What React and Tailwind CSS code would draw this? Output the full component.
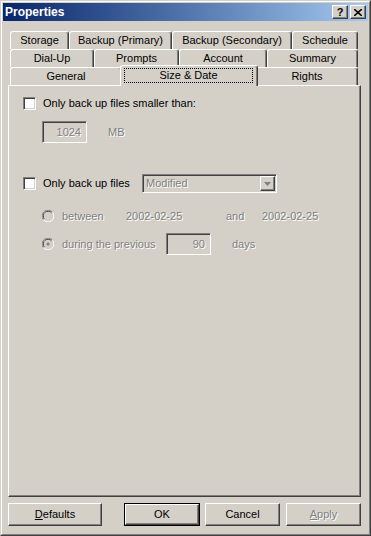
import React from 'react';

const raised = 'border border-t-white border-l-white border-b-[#404040] border-r-[#404040] shadow-[inset_-1px_-1px_0_#808080]';
const sunken = 'border border-t-[#808080] border-l-[#808080] border-b-white border-r-white shadow-[inset_1px_1px_0_#404040,inset_-1px_-1px_0_#d4d0c8]';
const dim = 'text-[#808080] [text-shadow:1px_1px_0_#fff]';

const rows = [
  [['Storage', 59], ['Backup (Primary)', 103], ['Backup (Secondary)', 120], ['Schedule', 66]],
  [['Dial-Up', 84], ['Prompts', 85], ['Account', 88], ['Summary', 91]],
];

function Tab({ label, width, selected }) {
  if (selected) {
    return (
      <div
        className="relative z-10 -mx-[2px] -mt-[2px] h-[21px] rounded-t-[3px] border-t border-l border-r border-t-white border-l-white border-r-[#404040] bg-[#d4d0c8] shadow-[inset_-1px_0_0_#808080] pl-[3px] pr-[4px] pt-[2px]"
        style={{ width: width + 4 }}
      >
        <div className="flex h-[15px] items-center justify-center border border-dotted border-black leading-none">
          {label}
        </div>
      </div>
    );
  }
  return (
    <div
      className="flex h-[18px] items-center justify-center rounded-t-[3px] border-t border-l border-r border-t-white border-l-white border-r-[#404040] shadow-[inset_-1px_0_0_#808080] leading-none"
      style={{ width }}
    >
      {label}
    </div>
  );
}

function Checkbox() {
  return <div className={`h-[13px] w-[13px] shrink-0 bg-white ${sunken}`} />;
}

function Radio({ checked }) {
  return (
    <svg width="12" height="12" viewBox="0 0 12 12" className="shrink-0">
      <path d="M10.5 2.2A5.5 5.5 0 0 0 1.5 9.8" fill="none" stroke="#808080" strokeWidth="1" />
      <path d="M9.6 3A4.3 4.3 0 0 0 2.4 9" fill="none" stroke="#404040" strokeWidth="1" />
      <path d="M1.5 9.8A5.5 5.5 0 0 0 10.5 2.2" fill="none" stroke="#ffffff" strokeWidth="1" />
      <circle cx="6" cy="6" r="4" fill="#d4d0c8" />
      {checked && <circle cx="6" cy="6" r="1.6" fill="#808080" />}
    </svg>
  );
}

function Button({ children, isDefault, width }) {
  return (
    <div
      className={`h-[23px] ${isDefault ? 'border border-black' : ''}`}
      style={{ width }}
    >
      <div className={`flex h-full w-full items-center justify-center ${raised}`}>{children}</div>
    </div>
  );
}

export default function App() {
  return (
    <div className="h-[536px] w-[371px] bg-[#d4d0c8] font-['Liberation_Sans',Arial,sans-serif] text-[11px] text-black">
      <div className="h-full w-full border border-t-[#d4d0c8] border-l-[#d4d0c8] border-b-[#404040] border-r-[#404040]">
        <div className="flex h-full w-full flex-col border border-t-white border-l-white border-b-[#808080] border-r-[#808080] p-[1px]">
          {/* Title bar */}
          <div className="flex h-[18px] items-center bg-linear-to-r from-[#0a246a] to-[#a6caf0] pl-[2px] pr-[2px]">
            <span className="text-[12px] font-bold text-white">Properties</span>
            <div className="ml-auto flex gap-[2px]">
              <div className={`flex h-[14px] w-[16px] items-center justify-center bg-[#d4d0c8] text-[11px] font-bold leading-none ${raised}`}>?</div>
              <div className={`flex h-[14px] w-[16px] items-center justify-center bg-[#d4d0c8] ${raised}`}>
                <svg width="8" height="7" viewBox="0 0 8 7">
                  <path d="M0 0L8 7M8 0L0 7" stroke="#000" strokeWidth="1.6" />
                </svg>
              </div>
            </div>
          </div>

          <div className="flex flex-1 flex-col px-[5px] pt-[10px]">
            {/* Tabs */}
            <div className="flex flex-col pl-[2px]">
              {rows.map((row, i) => (
                <div key={i} className="flex">
                  {row.map(([label, w]) => (
                    <Tab key={label} label={label} width={w} />
                  ))}
                </div>
              ))}
              <div className="flex">
                <Tab label="General" width={112} />
                <Tab label="Size & Date" width={134} selected />
                <Tab label="Rights" width={102} />
              </div>
            </div>

            {/* Panel */}
            <div className="-mt-[1px] flex h-[412px] w-[353px] flex-col border border-t-white border-l-white border-b-[#404040] border-r-[#404040] shadow-[inset_-1px_-1px_0_#808080] pl-[14px] pt-[11px]">
              <div className="flex h-[13px] items-center gap-[7px]">
                <Checkbox />
                <span>Only back up files smaller than:</span>
              </div>

              <div className="mt-[11px] flex h-[22px] items-center pl-[19px]">
                <div className={`flex h-[22px] w-[45px] items-center justify-end pr-[5px] ${sunken} ${dim}`}>1024</div>
                <span className={`ml-[21px] ${dim}`}>MB</span>
              </div>

              <div className="mt-[31px] flex h-[19px] items-center">
                <Checkbox />
                <span className="ml-[7px] w-[99px]">Only back up files</span>
                <div className={`flex h-[19px] w-[135px] items-center ${sunken}`}>
                  <span className={`flex-1 pl-[3px] ${dim}`}>Modified</span>
                  <div className={`mr-[1px] flex h-[15px] w-[15px] items-center justify-center bg-[#d4d0c8] ${raised}`}>
                    <svg width="7" height="4" viewBox="0 0 7 4">
                      <path d="M0 0H7L3.5 4Z" fill="#808080" />
                    </svg>
                  </div>
                </div>
              </div>

              <div className="mt-[16px] flex h-[14px] items-center pl-[19px]">
                <Radio />
                <span className={`ml-[8px] w-[64px] ${dim}`}>between</span>
                <span className={`w-[100px] ${dim}`}>2002-02-25</span>
                <span className={`w-[36px] ${dim}`}>and</span>
                <span className={dim}>2002-02-25</span>
              </div>

              <div className="mt-[10px] flex h-[22px] items-center pl-[19px]">
                <Radio checked />
                <span className={`ml-[8px] w-[104px] ${dim}`}>during the previous</span>
                <div className={`flex h-[22px] w-[45px] items-center justify-end pr-[5px] ${sunken} ${dim}`}>90</div>
                <span className={`ml-[21px] ${dim}`}>days</span>
              </div>
            </div>

            {/* Buttons */}
            <div className="mt-[6px] flex">
              <Button width={94}>
                <span><span className="underline">D</span>efaults</span>
              </Button>
              <div className="ml-[22px]">
                <Button width={76} isDefault>OK</Button>
              </div>
              <div className="ml-[5px]">
                <Button width={75}>Cancel</Button>
              </div>
              <div className="ml-[6px]">
                <Button width={75}>
                  <span className={dim}><span className="underline">A</span>pply</span>
                </Button>
              </div>
            </div>
          </div>
        </div>
      </div>
    </div>
  );
}
